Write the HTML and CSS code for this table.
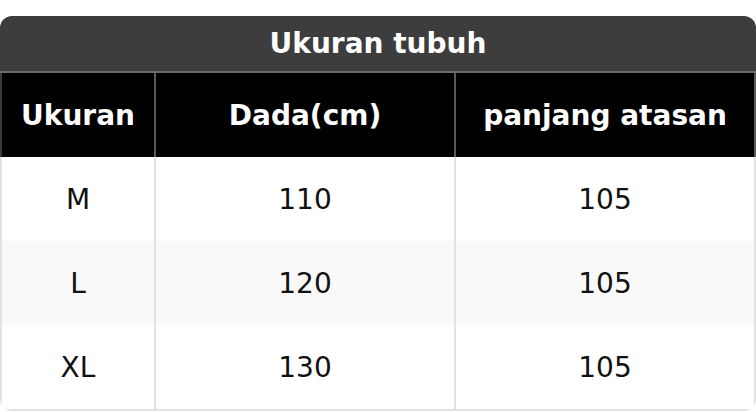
FILE: index.html
```html
<!DOCTYPE html>
<html>
<head>
<meta charset="utf-8">
<link rel="stylesheet" href="styles.css">
</head>
<body>
<div class="wrap">
  <table class="size-table">
    <colgroup>
      <col class="c1"><col class="c2"><col class="c3">
    </colgroup>
    <thead>
      <tr><th class="title" colspan="3">Ukuran tubuh</th></tr>
      <tr class="head">
        <th>Ukuran</th>
        <th>Dada(cm)</th>
        <th>panjang atasan</th>
      </tr>
    </thead>
    <tbody>
      <tr><td>M</td><td>110</td><td>105</td></tr>
      <tr class="alt"><td>L</td><td>120</td><td>105</td></tr>
      <tr class="last"><td>XL</td><td>130</td><td>105</td></tr>
    </tbody>
  </table>
</div>
</body>
</html>
```
FILE: styles.css
```css
html, body {
  margin: 0;
  padding: 0;
  background: #ffffff;
}
body {
  padding-top: 16px;
  font-family: "DejaVu Sans", "Liberation Sans", sans-serif;
}
.wrap {
  width: 756px;
  border-radius: 12px;
  overflow: hidden;
}
.size-table {
  width: 756px;
  table-layout: fixed;
  border-collapse: separate;
  border-spacing: 0;
}
.c1 { width: 156px; }
.c2 { width: 300px; }
.c3 { width: 300px; }
.size-table th,
.size-table td {
  padding: 0;
  text-align: center;
  vertical-align: middle;
  box-sizing: border-box;
  font-size: 28px;
}
.title {
  height: 57px;
  background: #3d3d3d;
  color: #ffffff;
  font-weight: bold;
  border-bottom: 2px solid #6b6b6b;
}
.head th {
  height: 84px;
  background: #000000;
  color: #ffffff;
  font-weight: bold;
  border-right: 2px solid #5a5a5a;
}
.head th:first-child {
  border-left: 2px solid #3a3a3a;
}
.size-table td {
  height: 84px;
  color: #111111;
  background: #ffffff;
  border-right: 2px solid #e2e2e2;
}
.size-table td:first-child {
  border-left: 2px solid #e2e2e2;
}
.alt td {
  background: #f9f9f9;
}
.last td {
  height: 86px;
  border-bottom: 2px solid #e2e2e2;
}
```
